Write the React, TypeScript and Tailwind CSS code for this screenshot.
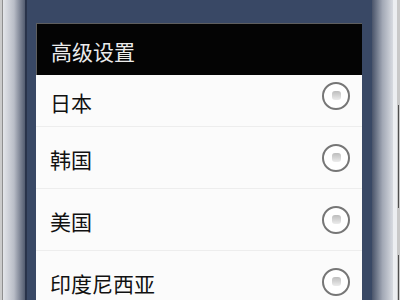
const countries = ['日本', '韩国', '美国', '印度尼西亚'];

function Radio({ lift }: { lift?: boolean }) {
  return (
    <div
      className={
        'w-[28px] h-[28px] rounded-full border-2 border-[#767676] bg-white flex items-center justify-center ' +
        (lift ? '-mt-[10px]' : '')
      }
    >
      <div className="w-[9px] h-[9px] rounded-[3px] bg-gradient-to-b from-[#bdbdbd] to-[#ececec]" />
    </div>
  );
}

export default function App() {
  return (
    <div
      className="w-[400px] h-[300px] flex overflow-hidden bg-[#394865]"
      style={{ fontFamily: '"Noto Sans CJK SC", "Noto Sans", sans-serif' }}
    >
      {/* left bezel */}
      <div className="flex shrink-0">
        <div className="w-[2px] bg-[#cbcbcb]" />
        <div className="w-px bg-[#8f8f8f]" />
        <div className="w-[22px] bg-gradient-to-r from-[#e4e6ea] via-[#b9bdc7] to-[#535c70]" />
        <div className="w-[2px] bg-[#29334a]" />
      </div>

      {/* screen */}
      <div className="w-[345px] shrink-0 pt-[23px] pl-[9px] pr-[10px]">
        <div className="flex flex-col">
          <div className="h-[52px] bg-[#040404] border-t border-l border-[#5e5e5e] flex items-center pl-[14px] pt-[4px]">
            <span className="text-[21px] text-[#ebebeb] leading-none">高级设置</span>
          </div>
          <div className="bg-[#fbfbfb]">
            {countries.map((name, i) => (
              <div
                key={name}
                className={
                  'flex items-center justify-between pl-[14px] pr-[12px] border-b border-[#ededed] ' +
                  (i === 0 ? 'h-[52px]' : 'h-[62px]')
                }
              >
                <span className="text-[21px] text-[#111] leading-none pt-[3px]">{name}</span>
                <Radio lift={i === 0} />
              </div>
            ))}
          </div>
        </div>
      </div>

      {/* right bezel */}
      <div className="flex shrink-0 flex-1">
        <div className="w-[21px] bg-gradient-to-r from-[#4a546a] via-[#a2a8b5] to-[#d8dbe1]" />
        <div className="w-[4px] bg-[#eceef1]" />
        <div className="flex-1 bg-[#c9c9c9] flex flex-col items-center">
          <div className="w-px h-[103px] mt-[105px] bg-[#4f4f4f]" />
          <div className="w-px flex-1 mt-[47px] bg-[#4f4f4f]" />
        </div>
      </div>
    </div>
  );
}
